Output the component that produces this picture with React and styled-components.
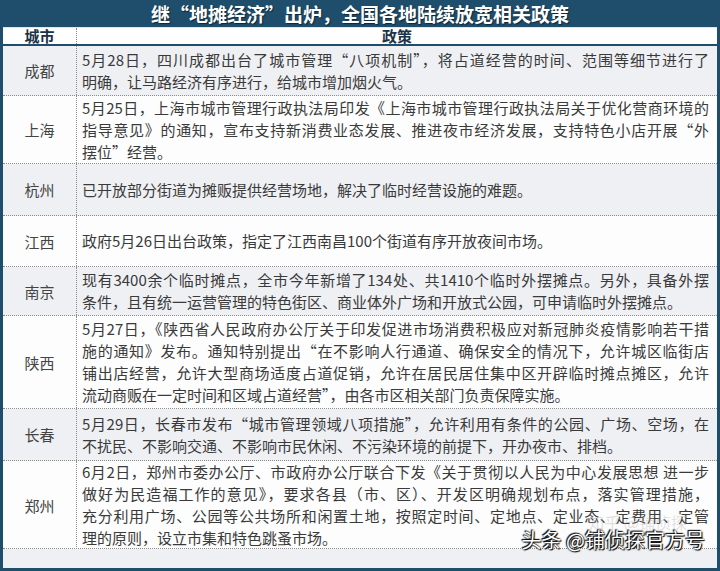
import React from "react";
import styled, { createGlobalStyle } from "styled-components";

const rows = [
  {
    city: "成都",
    h: 50,
    shade: true,
    lines: [
      "5月28日，四川成都出台了城市管理“八项机制”，将占道经营的时间、范围等细节进行了",
      "明确，让马路经济有序进行，给城市增加烟火气。",
    ],
  },
  {
    city: "上海",
    h: 68,
    lines: [
      "5月25日，上海市城市管理行政执法局印发《上海市城市管理行政执法局关于优化营商环境的",
      "指导意见》的通知，宣布支持新消费业态发展、推进夜市经济发展，支持特色小店开展“外",
      "摆位”经营。",
    ],
  },
  {
    city: "杭州",
    h: 52,
    shade: true,
    lines: ["已开放部分街道为摊贩提供经营场地，解决了临时经营设施的难题。"],
  },
  {
    city: "江西",
    h: 51,
    lines: ["政府5月26日出台政策，指定了江西南昌100个街道有序开放夜间市场。"],
  },
  {
    city: "南京",
    h: 49,
    shade: true,
    lines: [
      "现有3400余个临时摊点，全市今年新增了134处、共1410个临时外摆摊点。另外，具备外摆",
      "条件，且有统一运营管理的特色街区、商业体外广场和开放式公园，可申请临时外摆摊点。",
    ],
  },
  {
    city: "陕西",
    h: 93,
    lines: [
      "5月27日，《陕西省人民政府办公厅关于印发促进市场消费积极应对新冠肺炎疫情影响若干措",
      "施的通知》发布。通知特别提出“在不影响人行通道、确保安全的情况下，允许城区临街店",
      "铺出店经营，允许大型商场适度占道促销，允许在居民居住集中区开辟临时摊点摊区，允许",
      "流动商贩在一定时间和区域占道经营”，由各市区相关部门负责保障实施。",
    ],
  },
  {
    city: "长春",
    h: 52,
    shade: true,
    lines: [
      "5月29日，长春市发布“城市管理领域八项措施”，允许利用有条件的公园、广场、空场，在",
      "不扰民、不影响交通、不影响市民休闲、不污染环境的前提下，开办夜市、排档。",
    ],
  },
  {
    city: "郑州",
    h: 88,
    lines: [
      "6月2日，郑州市委办公厅、市政府办公厅联合下发《关于贯彻以人民为中心发展思想 进一步",
      "做好为民造福工作的意见》，要求各县（市、区）、开发区明确规划布点，落实管理措施，",
      "充分利用广场、公园等公共场所和闲置土地，按照定时间、定地点、定业态、定费用、定管",
      "理的原则，设立市集和特色跳蚤市场。",
    ],
  },
];

function App() {
  return (
    <>
      <GlobalStyle />
      <Frame>
        <Title>继“地摊经济”出炉，全国各地陆续放宽相关政策</Title>
        <HeaderRow>
          <HeadCell $divider>城市</HeadCell>
          <HeadCell>政策</HeadCell>
        </HeaderRow>
        {rows.map((r) => (
          <Row key={r.city} $h={r.h} $shade={r.shade}>
            <City>{r.city}</City>
            <Policy>
              {r.lines.map((l, i) => (
                <Line key={i} $full={i < r.lines.length - 1}>
                  {l}
                </Line>
              ))}
            </Policy>
          </Row>
        ))}
        <Tail />
        <Watermark>
          <Faint>知乎 @铺侦探</Faint>
          <Mark>头条 @铺侦探官方号</Mark>
        </Watermark>
      </Frame>
    </>
  );
}

export default App;

const GlobalStyle = createGlobalStyle`
  body {
    margin: 0;
    background: #fff;
    font-family: "Noto Sans CJK SC", "Noto Sans", sans-serif;
  }
`;

const navy = "#1f4d6c";

const Frame = styled.div`
  position: relative;
  width: 720px;
  height: 571px;
  box-sizing: border-box;
  border: 3px solid ${navy};
  border-top: none;
  display: flex;
  flex-direction: column;
  overflow: hidden;

  &::after {
    content: "";
    position: absolute;
    left: 332px;
    bottom: -2px;
    width: 52px;
    border-top: 1px dotted #e8e8e8;
  }
`;

const Title = styled.div`
  height: 27px;
  margin: 0 -3px;
  background: ${navy};
  color: #fff;
  font-size: 19px;
  font-weight: 700;
  line-height: 27px;
  text-align: center;
  text-shadow: 1px 1px 1px rgba(0, 0, 0, 0.5);
  border-bottom: 1px solid #dfe6ec;
`;

const HeaderRow = styled.div`
  display: grid;
  grid-template-columns: 74px 1fr;
  height: 16px;
  background: #fff;
  border-bottom: 2px solid ${navy};
`;

const HeadCell = styled.div`
  font-size: 15px;
  font-weight: 700;
  line-height: 16px;
  color: #1c3348;
  text-align: center;
  border-right: ${(p) => (p.$divider ? "1px dotted #888" : "none")};
`;

const Row = styled.div`
  display: grid;
  grid-template-columns: 74px 1fr;
  height: ${(p) => p.$h}px;
  box-sizing: border-box;
  background: ${(p) => (p.$shade ? "#eef0f4" : "#fdfdfd")};
  border-bottom: 1px dotted #8c8c8c;
  color: #3a3a3a;
`;

const City = styled.div`
  display: flex;
  align-items: center;
  justify-content: center;
  font-size: 15px;
  color: #444;
  border-right: 1px dotted #8c8c8c;
`;

const Policy = styled.div`
  display: flex;
  flex-direction: column;
  justify-content: center;
  padding: 0 8px 0 5px;
  font-size: 15px;
  line-height: 22px;
`;

const Line = styled.div`
  white-space: nowrap;
  text-align: ${(p) => (p.$full ? "justify" : "left")};
  text-align-last: ${(p) => (p.$full ? "justify" : "left")};
`;

const Tail = styled.div`
  flex: 1;
  background: #eef0f4;
`;

const Watermark = styled.div`
  position: absolute;
  right: 12px;
  bottom: 16px;
  display: flex;
  flex-direction: column;
  align-items: flex-end;
`;

const Faint = styled.span`
  font-size: 16px;
  line-height: 12px;
  color: rgba(170, 170, 170, 0.35);
  margin-right: 18px;
`;

const Mark = styled.span`
  font-size: 20px;
  line-height: 24px;
  color: #fff;
  text-shadow: 0 0 2px #000, 1px 1px 1px #000, -1px -1px 1px #000;
`;
